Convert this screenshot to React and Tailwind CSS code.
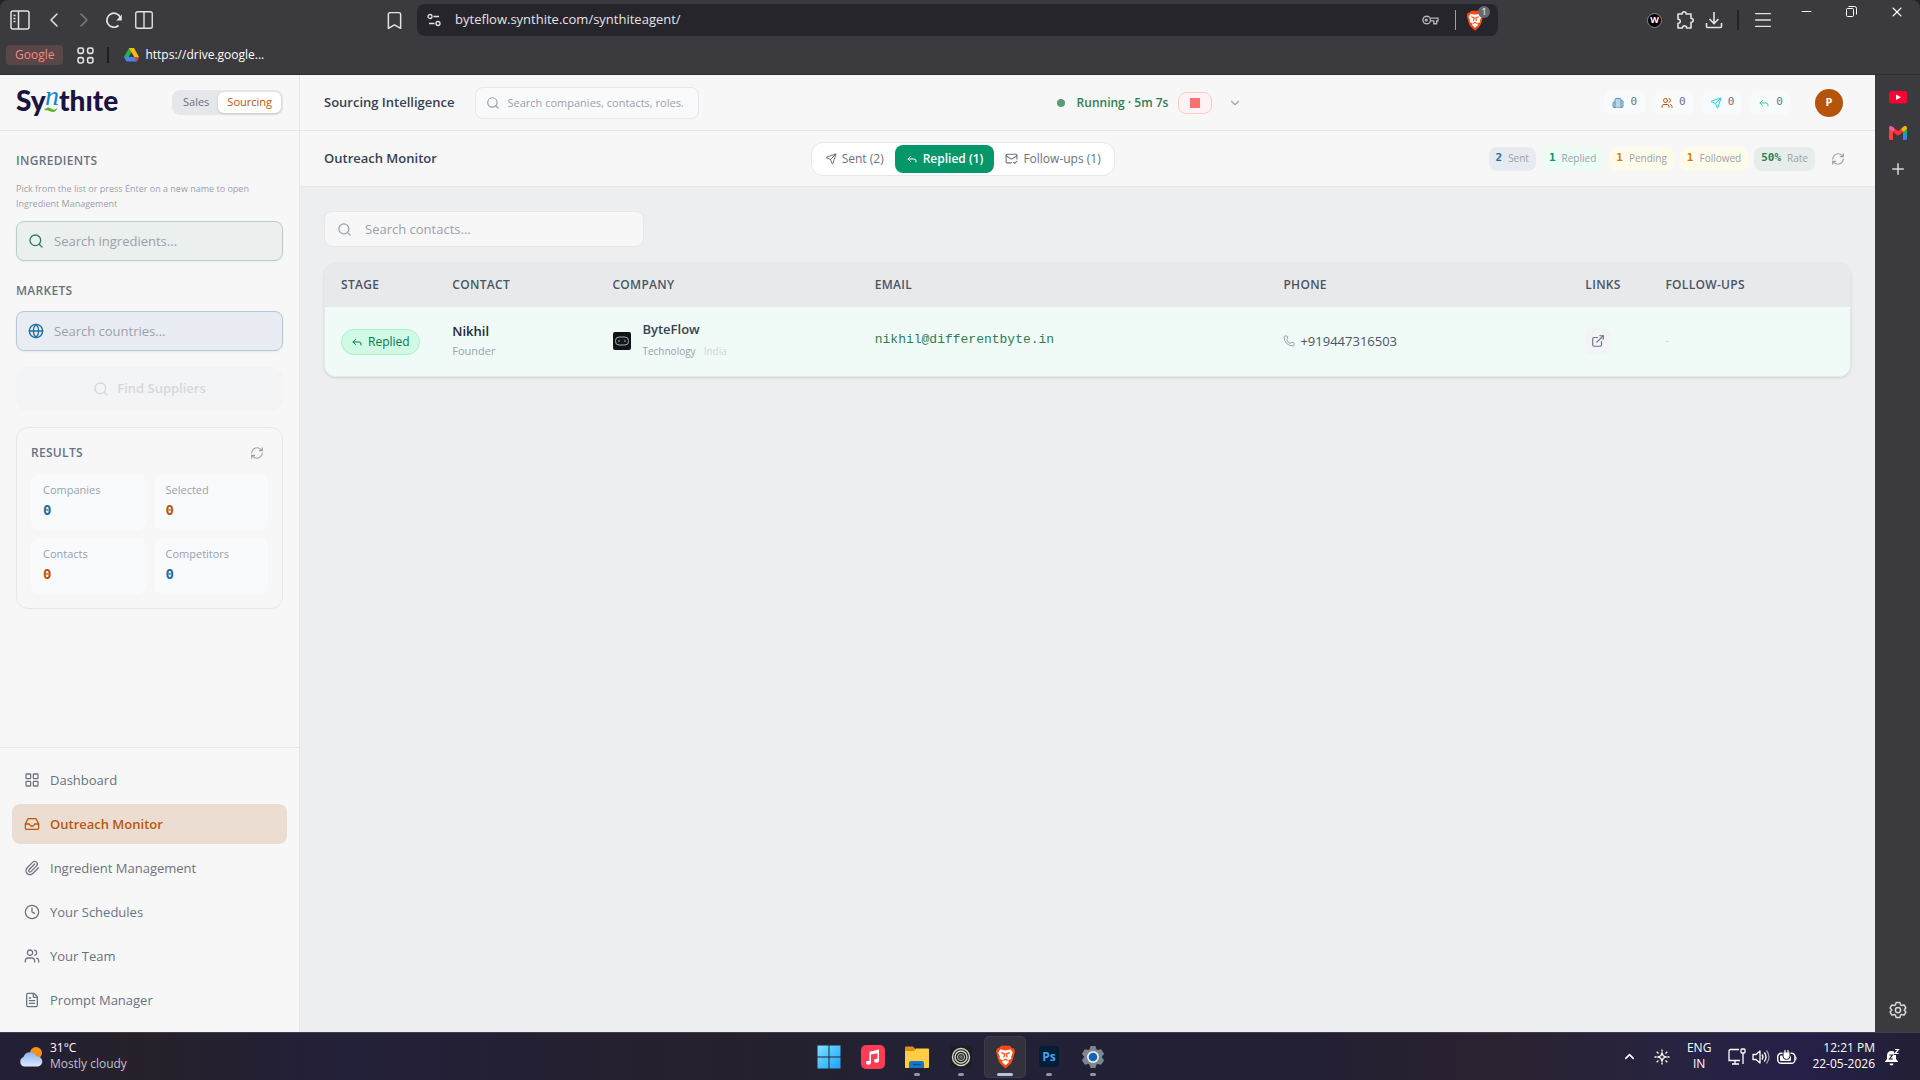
import React from "react";
import {
  Search, Globe, RefreshCw, LayoutGrid, Inbox, Paperclip, Clock, Users, FileText,
  Send, MailCheck, ChevronDown, Phone, ExternalLink, Building2, Bookmark, Plus, Reply,
  ChevronLeft, ChevronRight, ChevronUp, X, Minus, Menu, Columns2,
} from "lucide-react";

const BraveIcon = ({ className }) => (
  <svg viewBox="0 0 24 28" className={className} aria-hidden="true">
    <path d="M7 1h10l2.500 2.500L22 4l1 4-1 3c-1 5-2 8-4 11l-6 5.500-6-5.500C4 19 3 16 2 11L1 8l1-4 2.500-.5Z" fill="#ff4a12" />
    <path d="m6 5 4 1h4l4-1 2.500 4-2 5 .5 2-4 2 1 2-4 3.500L8 20l1-2-4-2 .5-2-2-5Z" fill="#fff" />
    <path d="m7 9 4 1.500-1 4M17 9l-4 1.500 1 4M9.500 18l2.500-1.500 2.500 1.500" stroke="#ff4a12" strokeWidth="1.500" fill="none" />
  </svg>
);

const GearIcon = ({ className }) => (
  <svg viewBox="0 0 24 24" className={className} fill="none" stroke="currentColor" strokeWidth="2" strokeLinejoin="round" aria-hidden="true">
    <path d="M9.600 2h4.800l1 3.200 1.400.8 3.300-.8 2.400 4.100L20.200 12l2.300 2.700-2.400 4.100-3.300-.8-1.400.8-1 3.200H9.600l-1-3.200-1.400-.8-3.300.8-2.400-4.100L3.800 12 1.500 9.300l2.400-4.100 3.300.8 1.400-.8Z" />
    <circle cx="12" cy="12" r="3.500" />
  </svg>
);

function Logo() {
  return (
    <svg viewBox="0 0 104 48" className="h-12 w-[104px] overflow-visible" role="img" aria-label="Synthite">
      <g fontFamily="Lato, sans-serif" fontWeight="900" fontSize="28" fill="#1b1340">
        <text x="0" y="32">Sy</text>
        <text x="43" y="32">thıte</text>
      </g>
      <text x="29" y="26" fontFamily="'Liberation Serif', serif" fontStyle="italic" fontSize="28" fill="#0f86cc">n</text>
      <path d="M28 31.500c3-4.500 6-3 8-1.500 2 1 3.500.8 5.500-1.500-1 4.500-4.500 5.500-7.500 3.800-2-1-4-1.500-6-.8Z" fill="#62b32e" />
    </svg>
  );
}

function BrowserBar() {
  return (
    <header className="shrink-0 rounded-t-lg border-b border-[#2f2e32] bg-[#3b3a3e] text-[#e4e3e6]">
      <div className="flex h-10 items-center">
        <div className="flex flex-1 items-center pl-[10px]">
          <button aria-label="Sidebar">
            <svg viewBox="0 0 20 20" className="size-5" fill="none" stroke="currentColor" strokeWidth="1.500">
              <rect x="1" y="1" width="18" height="18" rx="2" /><path d="M8.500 1v18" /><path d="M3.500 5.500h2M3.500 8.500h2M3.500 11.500h2" />
            </svg>
          </button>
          <button aria-label="Back" className="ml-3"><ChevronLeft className="size-6" strokeWidth={1.500} /></button>
          <button aria-label="Forward" className="ml-[6px] text-[#7c7b80]"><ChevronRight className="size-6" strokeWidth={1.500} /></button>
          <button aria-label="Reload" className="ml-[9px]">
            <svg viewBox="0 0 18 18" className="size-[18px]" fill="none" stroke="currentColor" strokeWidth="1.700">
              <path d="M13.500 14.500A7 7 0 1 1 15.500 7" /><path d="M16.800 3.500v6h-5.500Z" fill="currentColor" stroke="none" />
            </svg>
          </button>
          <button aria-label="Split view" className="ml-[10px]"><Columns2 className="size-[22px]" strokeWidth={1.500} /></button>
          <button aria-label="Bookmark" className="mr-[12px] ml-auto"><Bookmark className="size-[21px]" strokeWidth={1.700} /></button>
        </div>
        <div className="flex h-8 w-[56.3%] items-center rounded-lg bg-[#26252b] pr-2 pl-[10px]">
          <svg viewBox="0 0 14 14" className="size-[14px] shrink-0" fill="none" stroke="currentColor" strokeWidth="1.300" aria-hidden="true">
            <circle cx="3" cy="3.500" r="2" /><path d="M6.500 3.500H12M2 10.500h5.500" /><circle cx="11" cy="10.500" r="2" />
          </svg>
          <input aria-label="Address" defaultValue="byteflow.synthite.com/synthiteagent/" className="ml-3 min-w-0 flex-1 bg-transparent px-[2px] text-[13px] outline-none" />
          <svg viewBox="0 0 18 12" className="h-3 w-[17px]" fill="none" stroke="#b6b5ba" strokeWidth="1.400" role="img" aria-label="Key">
            <circle cx="5" cy="6" r="4" /><circle cx="4.500" cy="6" r="1" /><path d="M9 4h8v3h-1.500v3h-3V7H9" />
          </svg>
          <span className="ml-4 h-5 w-px bg-[#a09fa4]" />
          <button aria-label="Brave Shields" className="relative ml-[10px] w-6">
            <BraveIcon className="h-[21px] w-[18px]" />
            <span className="absolute -top-1 right-0 flex size-3 items-center justify-center rounded-full bg-[#666975] text-[9px] text-white">1</span>
          </button>
        </div>
        <div className="flex h-full flex-1 items-center pr-[15px]">
          <button aria-label="Wallet" className="ml-auto flex size-[15px] items-center justify-center rounded-full border border-[#8b8b8b] bg-black text-[9px] font-bold text-white">W</button>
          <button aria-label="Extensions" className="ml-[13px]">
            <svg viewBox="0 0 20 20" className="size-5" fill="none" stroke="currentColor" strokeWidth="1.600" strokeLinejoin="round">
              <path d="M3 4h4.200c-.7-3 4.600-3 3.900 0H16v4.500c3-.7 3 4.200 0 3.800V18h-4.500c.5-3-4.500-3-4 0H3v-4.800c3 .5 3-4.500 0-4Z" />
            </svg>
          </button>
          <button aria-label="Downloads" className="ml-[10px]">
            <svg viewBox="0 0 18 18" className="size-[18px]" fill="none" stroke="currentColor" strokeWidth="1.600">
              <path d="M9 1v11M4.500 8 9 12.500 13.500 8M1.500 12v3.500c0 .6.500 1 1 1h13c.5 0 1-.4 1-1V12" />
            </svg>
          </button>
          <span className="ml-[14px] h-5 w-[2px] bg-[#232226]" />
          <button aria-label="Menu" className="ml-[13px]"><Menu className="size-[22px]" strokeWidth={1.500} /></button>
          <div className="flex h-full items-start gap-[30px] pt-1 pl-[25px] text-white">
            <button aria-label="Minimize"><Minus className="size-[15px]" strokeWidth={1.600} /></button>
            <button aria-label="Restore">
              <svg viewBox="0 0 15 15" className="size-[15px]" fill="none" stroke="currentColor"><rect x="2.500" y="4.500" width="7" height="8" rx="1" /><path d="M4.500 2.500h6a2 2 0 0 1 2 2v6" /></svg>
            </button>
            <button aria-label="Close"><X className="size-4" strokeWidth={1.600} /></button>
          </div>
        </div>
      </div>
      <div className="flex h-[34px] items-start pt-[5px] pl-[6px]">
        <a href="#google" className="flex h-5 items-center rounded-sm bg-[#594647] px-[9px] text-xs text-[#f28b82]">Google</a>
        <button aria-label="Tab groups" className="ml-[14px] pt-[2px]">
          <svg viewBox="0 0 16 16" className="size-[17px]" fill="none" stroke="currentColor" strokeWidth="1.500">
            <rect x="1" y="1" width="5" height="5" rx="1.500" /><rect x="10" y="1" width="5" height="5" rx="1.500" /><rect x="1" y="10" width="5" height="5" rx="1.500" /><rect x="10" y="10" width="5" height="5" rx="1.500" />
          </svg>
        </button>
        <span className="mt-[2px] ml-[13px] h-4 w-[2px] bg-[#1e1d21]" />
        <a href="#drive" className="ml-[15px] flex h-5 items-center gap-[6px] text-xs text-white">
          <svg viewBox="0 0 15 14" className="h-[14px] w-[15px]" aria-hidden="true">
            <path d="M5 0h5L7.500 4.500 2.500 13 0 8.800Z" fill="#34a853" /><path d="M10 0 15 9h-5L5 0Z" fill="#fbbc04" /><path d="M0 9h15l-2.500 4.500h-10Z" fill="#4285f4" /><path d="M10 9h5l-2.500 4.500Z" fill="#ea4335" /><path d="M7.500 4.500 10 9H5Z" fill="#3b3a3e" />
          </svg>
          https://drive.google...
        </a>
      </div>
    </header>
  );
}

const sectionTitle = "text-xs font-semibold tracking-wide text-gray-500";

const results = [
  ["Companies", "text-[#1c6f9f]"],
  ["Selected", "text-[#b9560c]"],
  ["Contacts", "text-[#b9560c]"],
  ["Competitors", "text-[#1c6f9f]"],
];

const navItems = [
  ["Dashboard", LayoutGrid],
  ["Outreach Monitor", Inbox],
  ["Ingredient Management", Paperclip],
  ["Your Schedules", Clock],
  ["Your Team", Users],
  ["Prompt Manager", FileText],
];

function Sidebar() {
  return (
    <aside className="flex w-[300px] shrink-0 flex-col border-r border-gray-200 bg-[#f7f7f7]">
      <div className="flex h-14 shrink-0 items-center justify-between border-b border-gray-200 px-4">
        <Logo />
        <div className="flex rounded-lg bg-gray-200 p-[2px] text-[11px] font-medium">
          <button className="h-[21px] px-[9px] text-gray-500">Sales</button>
          <button className="h-[21px] rounded-md bg-white px-[9px] text-[#b9560c] shadow-sm">Sourcing</button>
        </div>
      </div>
      <div className="flex flex-1 flex-col px-4 pt-[22px]">
        <h2 className={`${sectionTitle} leading-4`}>INGREDIENTS</h2>
        <p className="mt-3 text-[9px] leading-[15px] text-gray-400">Pick from the list or press Enter on a new name to open Ingredient Management</p>
        <label className="mt-[10px] flex h-10 items-center gap-[10px] rounded-lg border border-[#b5d2c4] bg-[#ebefed] px-[11px] shadow-xs">
          <Search className="size-4 shrink-0 text-[#2f7d52]" />
          <input aria-label="Search ingredients" placeholder="Search ingredients..." className="min-w-0 flex-1 bg-transparent pt-[2px] text-[13px] outline-none placeholder:text-gray-400" />
        </label>
        <h2 className={`${sectionTitle} mt-[22px] leading-4`}>MARKETS</h2>
        <label className="mt-3 flex h-10 items-center gap-[10px] rounded-lg border border-[#b0cbde] bg-[#e9ecf2] px-[11px] shadow-xs">
          <Globe className="size-4 shrink-0 text-[#1c6f9f]" />
          <input aria-label="Search countries" placeholder="Search countries..." className="min-w-0 flex-1 bg-transparent pt-[2px] text-[13px] outline-none placeholder:text-gray-400" />
        </label>
        <button disabled className="mt-4 flex h-11 items-center justify-center gap-2 rounded-xl bg-[#f3f4f6] text-[13px] font-semibold text-[#d5d8de]">
          <Search className="size-4" />Find Suppliers
        </button>
        <section className="mt-4 rounded-xl border border-gray-200 px-[14px] pt-[15px] pb-[14px]">
          <div className="flex items-center justify-between pr-1">
            <h2 className={`${sectionTitle} leading-5`}>RESULTS</h2>
            <button aria-label="Refresh results" className="text-gray-400"><RefreshCw className="size-[14px]" /></button>
          </div>
          <div className="mt-[11px] grid grid-cols-2 gap-2">
            {results.map(([label, color]) => (
              <div key={label} className="h-14 rounded-lg bg-[#f9fafb] px-3 pt-2">
                <div className="text-[11px] leading-4 text-gray-400">{label}</div>
                <div className={`mt-[2px] font-['DejaVu_Sans_Mono',monospace] text-sm leading-5 font-bold ${color}`}>0</div>
              </div>
            ))}
          </div>
        </section>
      </div>
      <nav className="flex flex-col gap-1 border-t border-gray-200 p-3">
        {navItems.map(([label, Icon]) => (
          <a
            key={label}
            href="#nav"
            className={`flex h-10 items-center gap-[10px] rounded-lg px-3 text-[13px] ${label === "Outreach Monitor" ? "bg-[#ecddd3] font-semibold text-[#b9560c]" : "text-gray-500"}`}
          >
            <Icon className="size-4" strokeWidth={1.900} /><span className="pt-[2px]">{label}</span>
          </a>
        ))}
      </nav>
    </aside>
  );
}

const counters = [
  [Building2, "fill-[#bcd5e4] text-[#5b94b8]", "Companies"],
  [Users, "text-[#b9560c]", "Contacts"],
  [Send, "text-[#22d3ee]", "Sent"],
  [Reply, "text-[#34d399]", "Replied"],
];

const stats = [
  ["2", "Sent", "bg-[#e7ebf1]", "text-[#1c6f9f]"],
  ["1", "Replied", "bg-[#ecfdf5]", "text-[#059669]"],
  ["1", "Pending", "bg-[#fffbeb]", "text-[#d97706]"],
  ["1", "Followed", "bg-[#fffbeb]", "text-[#d97706]"],
  ["50%", "Rate", "bg-[#e7edea]", "text-[#2f7d52]"],
];

function PageHeader() {
  return (
    <div className="flex h-14 shrink-0 items-center justify-between border-b border-gray-200 bg-[#f7f7f7] px-6">
      <div className="flex items-center gap-5">
        <h1 className="pt-px text-[13px] font-semibold text-gray-700">Sourcing Intelligence</h1>
        <label className="flex h-8 w-56 items-center gap-2 rounded-lg border border-gray-200 bg-[#f9fafb] px-[10px]">
          <Search className="size-[14px] shrink-0 text-gray-400" />
          <input aria-label="Search everything" placeholder="Search companies, contacts, roles..." className="w-[175px] bg-transparent pt-[2px] text-[11px] outline-none placeholder:text-gray-400" />
        </label>
      </div>
      <div className="flex items-center">
        <span className="size-2 rounded-full bg-[#5c9b78]" />
        <span className="ml-3 pt-px text-xs font-semibold text-[#2f7d52]">Running · 5m 7s</span>
        <button aria-label="Stop" className="ml-[10px] flex h-[22px] w-[34px] items-center justify-center rounded-lg border border-[#fecaca] bg-[#fef2f2]">
          <span className="size-[10px] bg-[#f87171]" />
        </button>
        <button aria-label="Show run details" className="ml-4 pr-1 text-gray-400"><ChevronDown className="size-[14px]" /></button>
      </div>
      <div className="flex items-center justify-end gap-2 pr-2">
        {counters.map(([Icon, color, label]) => (
          <span key={label} title={label} className="flex h-6 items-center gap-[6px] rounded-lg bg-[#f9fafb] px-2 font-['DejaVu_Sans_Mono',monospace] text-[11px] text-gray-500">
            <Icon className={`size-3 ${color}`} />0
          </span>
        ))}
        <button aria-label="Account" className="ml-4 flex size-7 items-center justify-center rounded-full bg-[#b5540b] text-[11px] font-bold text-white">P</button>
      </div>
    </div>
  );
}

function MonitorHeader() {
  const tab = "flex h-7 items-center gap-[5px] rounded-lg px-[11px] text-xs";
  return (
    <div className="flex h-14 shrink-0 items-center justify-between border-b border-gray-200 bg-[#f7f7f7] px-6">
      <h2 className="pt-px text-[13px] font-semibold text-gray-700">Outreach Monitor</h2>
      <div className="flex rounded-xl border border-gray-200 bg-white p-[2px]">
        <button className={`${tab} font-medium text-gray-500`}><Send className="size-3" />Sent (2)</button>
        <button className={`${tab} bg-[#059669] font-semibold text-white`}><Reply className="size-3" />Replied (1)</button>
        <button className={`${tab} font-medium text-gray-500`}><MailCheck className="size-[13px]" />Follow-ups (1)</button>
      </div>
      <div className="flex items-center justify-end gap-[6px]">
        {stats.map(([value, label, bg, color]) => (
          <span key={label} className={`flex h-6 items-center gap-[6px] rounded-lg px-[7px] ${bg}`}>
            <b className={`font-['DejaVu_Sans_Mono',monospace] text-[11px] ${color}`}>{value}</b>
            <span className="text-[10px] text-gray-400">{label}</span>
          </span>
        ))}
        <button aria-label="Refresh" className="ml-1 p-[6px] text-gray-400"><RefreshCw className="size-[14px]" /></button>
      </div>
    </div>
  );
}

const columns = [
  ["STAGE", "w-[7.3%]"], ["CONTACT", "w-[10.5%]"], ["COMPANY", "w-[17.2%]"], ["EMAIL", "w-[26.8%]"],
  ["PHONE", "w-[19.8%]"], ["LINKS", "w-[5.25%]"], ["FOLLOW-UPS", ""],
];

function ContactsTable() {
  return (
    <div className="mt-4 overflow-hidden rounded-xl border border-gray-200 shadow-sm">
      <table className="w-full table-fixed text-left">
        <thead className="bg-[#e8e9eb]">
          <tr className="h-[42px] border-b border-gray-200">
            {columns.map(([name, width]) => (
              <th key={name} scope="col" className={`px-4 text-xs font-semibold tracking-wide text-gray-600 ${width}`}>{name}</th>
            ))}
          </tr>
        </thead>
        <tbody className="bg-[#f0faf7]">
          <tr className="h-[70px]">
            <td className="px-4">
              <span className="inline-flex h-[26px] items-center gap-[5px] rounded-full border border-[#a7f3d0] bg-[#d1fae5] px-[9px] align-middle text-xs font-medium text-[#047857]">
                <Reply className="size-3" />Replied
              </span>
            </td>
            <td className="px-4">
              <div className="text-[13px] leading-5 font-semibold text-gray-800">Nikhil</div>
              <div className="text-[11px] leading-5 text-gray-400">Founder</div>
            </td>
            <td className="px-4">
              <div className="flex items-center gap-[10px]">
                <svg viewBox="0 0 20 20" className="size-5" role="img" aria-label="ByteFlow logo">
                  <rect x="1" y="1" width="18" height="18" rx="2" fill="#101214" /><rect x="3.500" y="6" width="13" height="8" rx="3.500" fill="#15191b" stroke="#a9adb0" /><rect x="6" y="9" width="2" height="2" fill="#3b6c80" /><rect x="12" y="9" width="2" height="2" fill="#3b6c80" />
                </svg>
                <div>
                  <div className="text-[13px] leading-5 font-semibold text-gray-700">ByteFlow</div>
                  <div className="flex gap-2 text-[10px] leading-6 text-gray-400">Technology <span className="text-gray-300">India</span></div>
                </div>
              </div>
            </td>
            <td className="px-4"><a href="mailto:nikhil@differentbyte.in" className="block pb-[3px] font-['Liberation_Mono',monospace] text-[13px] text-[#2f7d52]">nikhil@differentbyte.in</a></td>
            <td className="px-4">
              <span className="flex items-center gap-[5px] text-[13px] text-gray-600"><Phone className="size-3 text-gray-400" />+919447316503</span>
            </td>
            <td className="px-4">
              <button aria-label="Open link" className="flex size-[26px] items-center justify-center rounded-md bg-[#f3f4f6] text-gray-500"><ExternalLink className="size-[14px]" /></button>
            </td>
            <td className="px-4 text-xs text-gray-300">-</td>
          </tr>
        </tbody>
      </table>
    </div>
  );
}

function SideRail() {
  return (
    <aside className="flex w-[45px] shrink-0 flex-col items-center bg-[#3b3a3e] pt-4 text-[#d8d7da]">
      <button aria-label="YouTube">
        <svg viewBox="0 0 18 13" className="h-[13px] w-[18px]"><rect width="18" height="12.500" rx="2.500" fill="#ff0033" /><path d="M7 3.500v5.600l5-2.800Z" fill="#fff" /></svg>
      </button>
      <button aria-label="Gmail" className="mt-[22px]">
        <svg viewBox="0 0 18 14" className="h-[14px] w-[18px]">
          <path d="M14 3h4v9.500a1.500 1.500 0 0 1-1.500 1.500H14Z" fill="#3186ff" /><path d="M14 3h4v6l-4-1Z" fill="#18b45b" />
          <path d="M0 3h4v11H1.500A1.500 1.500 0 0 1 0 12.500Z" fill="#ff3f3a" />
          <path d="M2 2 9 7.500 16 2" fill="none" stroke="#f9352f" strokeWidth="3.800" strokeLinecap="round" strokeLinejoin="round" />
          <path d="M2 2l1.500 1.200" stroke="#f45c9a" strokeWidth="3.800" strokeLinecap="round" /><path d="M14.500 3.200 16 2" stroke="#ffb800" strokeWidth="3.800" strokeLinecap="round" />
        </svg>
      </button>
      <button aria-label="Add site" className="mt-5"><Plus className="size-[18px]" strokeWidth={2} /></button>
      <button aria-label="Settings" className="mt-auto mb-[13px]"><GearIcon className="size-[18px]" /></button>
    </aside>
  );
}

const taskItems = [
  ["Start", "", (
    <svg viewBox="0 0 24 24" className="size-6"><defs><linearGradient id="win" x1="0" y1="0" x2="1" y2="1"><stop stopColor="#7be3ff" /><stop offset="1" stopColor="#1ba1fb" /></linearGradient></defs><path d="M.5.5h11v11H.5ZM12.500.5h11v11h-11ZM.5 12.500h11v11H.5ZM12.500 12.500h11v11h-11Z" fill="url(#win)" /></svg>
  )],
  ["Music", "", (
    <svg viewBox="0 0 24 24" className="size-6"><rect width="24" height="24" rx="5" fill="#fb3c57" /><path d="M9.200 17.500V7.500l8-2v9.800" stroke="#fff" strokeWidth="1.600" fill="none" /><path d="M9 6.800 17.800 5v3L9 9.800Z" fill="#fff" /><ellipse cx="7.400" cy="17.800" rx="2.500" ry="2" fill="#fff" /><ellipse cx="15.500" cy="15.800" rx="2.500" ry="2" fill="#fff" /></svg>
  )],
  ["File Explorer", "bg-[#96949e] w-[6px]", (
    <svg viewBox="0 0 24 24" className="size-6"><path d="M0 2.500C0 1.500.5 1.500 1 1.500h7l2.500 2.500v4H0Z" fill="#d99310" /><path d="M0 6h9l2-2.500h12c.6 0 1 .4 1 1V22c0 .6-.4 1-1 1H1c-.6 0-1-.4-1-1Z" fill="#ffcd42" /><path d="M4 23v-5a2 2 0 0 1 2-2h11a2 2 0 0 1 2 2v5Z" fill="#1578c8" /><path d="M8 19.500h8" stroke="#0c4f8f" strokeWidth="1.300" /></svg>
  )],
  ["Recorder", "bg-[#96949e] w-[6px]", (
    <svg viewBox="0 0 24 24" className="size-6"><rect x="1" y="1" width="22" height="22" rx="3" fill="#1d1e1f" /><g fill="none" stroke="#d4d3cb"><circle cx="12" cy="12" r="8.500" strokeWidth="1.400" /><circle cx="12" cy="12" r="6" strokeWidth="1.400" /><circle cx="12" cy="12" r="3.500" strokeWidth="1" /></g><circle cx="12" cy="12" r="2" fill="#6c6d6b" /></svg>
  )],
  ["Brave", "bg-[#b3c4dc] w-4", <BraveIcon className="h-6 w-[21px]" />],
  ["Photoshop", "bg-[#96949e] w-[6px]", (
    <svg viewBox="0 0 24 24" className="size-6"><rect x="2" y="1" width="20" height="21" rx="4" fill="#001e36" /><text x="12" y="16" textAnchor="middle" fontFamily="Open Sans, sans-serif" fontWeight="700" fontSize="12" fill="#42a5f5">Ps</text></svg>
  )],
  ["Settings", "bg-[#96949e] w-[6px]", (
    <svg viewBox="0 0 24 24" className="size-6"><path d="M9.600 1h4.800l1 3.200 1.400.8 3.300-.8 3 4.600-2.400 3.200 2.400 3.200-3 4.600-3.300-.8-1.400.8-1 3.200H9.600l-1-3.200-1.400-.8-3.300.8-3-4.600L3.300 12 .9 8.800l3-4.600L7.200 5l1.400-.8Z" fill="#7d8790" /><circle cx="12" cy="12" r="6" fill="#e9edf0" /><circle cx="12" cy="12" r="4.300" fill="#1264b5" /></svg>
  )],
];

function Taskbar() {
  return (
    <footer className="grid h-12 shrink-0 grid-cols-[1fr_auto_1fr] items-center border-t border-[#413f4b] bg-[linear-gradient(90deg,#221f38_0%,#262129_7%,#23203a_18%,#25212c_38%,#222137_50%,#231f33_68%,#2b2230_78%,#272341_88%,#261f48_94%,#231f35_100%)] text-xs leading-4 text-white">
      <button className="flex items-center gap-[6px] pl-[18px] text-left">
        <svg viewBox="0 0 26 22" className="h-[22px] w-[26px]" aria-hidden="true">
          <defs><linearGradient id="cloud" x1="0" y1="0" x2="0" y2="1"><stop stopColor="#8fb3f0" /><stop offset="1" stopColor="#dbe9ff" /></linearGradient></defs>
          <circle cx="18" cy="7" r="6" fill="#f4901c" />
          <path d="M6 20.500a5 5 0 0 1-.5-9.500 7 7 0 0 1 13-.5 5 5 0 0 1 1.500 10Z" fill="url(#cloud)" />
        </svg>
        <span className="flex flex-col pb-[2px]"><span>31°C</span><span className="text-[#c3c0ca]">Mostly cloudy</span></span>
      </button>
      <div className="flex gap-1 pl-[2px]">
        {taskItems.map(([name, mark, icon]) => (
          <button key={name} aria-label={name} className={`relative flex size-10 items-center justify-center rounded ${name === "Brave" ? "bg-[#34313f] ring-1 ring-[#403d4a]" : ""}`}>
            {icon}
            {mark && <span className={`absolute bottom-px h-[3px] rounded-full ${mark}`} />}
          </button>
        ))}
      </div>
      <div className="flex items-center justify-end pr-5">
        <button aria-label="Show hidden icons"><ChevronUp className="size-[15px]" strokeWidth={2.500} /></button>
        <svg viewBox="0 0 16 16" className="ml-[17px] size-4" stroke="currentColor" fill="none" strokeWidth="1.300" aria-hidden="true"><path d="m8 4 1.200 2.800L12 8 9.200 9.200 8 12 6.800 9.200 4 8l2.800-1.200ZM8 .5v2M8 13.500v2M.5 8h2M13.500 8h2M2.700 2.700l1.800 1.800M11.500 11.500l1.800 1.800M2.700 13.300l1.800-1.800M11.500 4.500l1.800-1.800" /></svg>
        <button className="ml-[17px] pb-[2px] text-center">ENG<br />IN</button>
        <svg viewBox="0 0 18 17" className="ml-[17px] h-[17px] w-[18px]" fill="none" stroke="currentColor" strokeWidth="1.300" aria-hidden="true"><path d="M11 1.500H2.500A1.500 1.500 0 0 0 1 3v9.500h11M4 16h7M7 12.500V16" /><rect x="13" y="1" width="4" height="4" rx="1" /><path d="M15 5v11" /></svg>
        <svg viewBox="0 0 18 16" className="ml-[6px] h-4 w-[18px]" fill="none" stroke="currentColor" strokeWidth="1.300" strokeLinejoin="round" aria-hidden="true"><path d="M1 5.500h3L8 2v12l-4-3.500H1ZM10 5.500q2 2.500 0 5M12.300 3.500q3.500 4.500 0 9" /><path d="M14.500 1.500q5 6.500 0 13" stroke="#9d99a9" /></svg>
        <svg viewBox="0 0 20 14" className="ml-[7px] h-[14px] w-5" aria-hidden="true">
          <rect x=".7" y="3.200" width="17.300" height="10" rx="3.500" fill="none" stroke="currentColor" strokeWidth="1.400" />
          <path d="M18.500 6.500q1.500 1.700 0 3.500" stroke="currentColor" fill="none" />
          <rect x="3" y="5.500" width="11" height="5.500" rx="1" fill="currentColor" />
          <path d="M6 2h7v4a3.500 3.500 0 0 1-7 0Z" fill="#fff" stroke="#29223d" />
          <path d="M8 0v3M11 0v3" stroke="#fff" strokeWidth="1.200" />
        </svg>
        <button className="ml-[15px] pb-[2px] text-right">12:21 PM<br />22-05-2026</button>
        <svg viewBox="0 0 16 18" className="ml-[9px] h-[18px] w-4" aria-label="Notifications" role="img">
          <path d="M7.500 3C4.500 3 3 5 3 7.500V11l-2 2.500v.5h13v-.5L12 11V7.500C12 5 10.500 3 7.500 3Z" fill="currentColor" />
          <path d="M5.500 15.500h4a2 2 0 0 1-4 0Z" fill="currentColor" />
          <path d="M5.500 7h3l-3 4h3.500" stroke="#241f3a" strokeWidth="1.200" fill="none" />
          <path d="M10 0h6v7h-6Z" fill="#241f3a" />
          <path d="M11 1.500h3.500L11 5.500h3.500" stroke="currentColor" strokeWidth="1.200" fill="none" />
        </svg>
      </div>
    </footer>
  );
}

export default function App() {
  return (
    <div className="flex h-screen min-w-[1280px] flex-col bg-[#232226] font-['Open_Sans','Noto_Sans',sans-serif]">
      <BrowserBar />
      <div className="flex min-h-0 flex-1">
        <Sidebar />
        <main className="flex min-w-0 flex-1 flex-col bg-[#edeef0]">
          <PageHeader />
          <MonitorHeader />
          <div className="flex-1 p-6">
            <label className="flex h-9 w-80 items-center gap-[13px] rounded-lg border border-gray-200 bg-[#f7f7f7] px-3">
              <Search className="size-[15px] shrink-0 text-gray-400" />
              <input aria-label="Search contacts" placeholder="Search contacts..." className="min-w-0 flex-1 bg-transparent pt-[2px] text-[13px] outline-none placeholder:text-gray-400" />
            </label>
            <ContactsTable />
          </div>
        </main>
        <SideRail />
      </div>
      <Taskbar />
    </div>
  );
}
